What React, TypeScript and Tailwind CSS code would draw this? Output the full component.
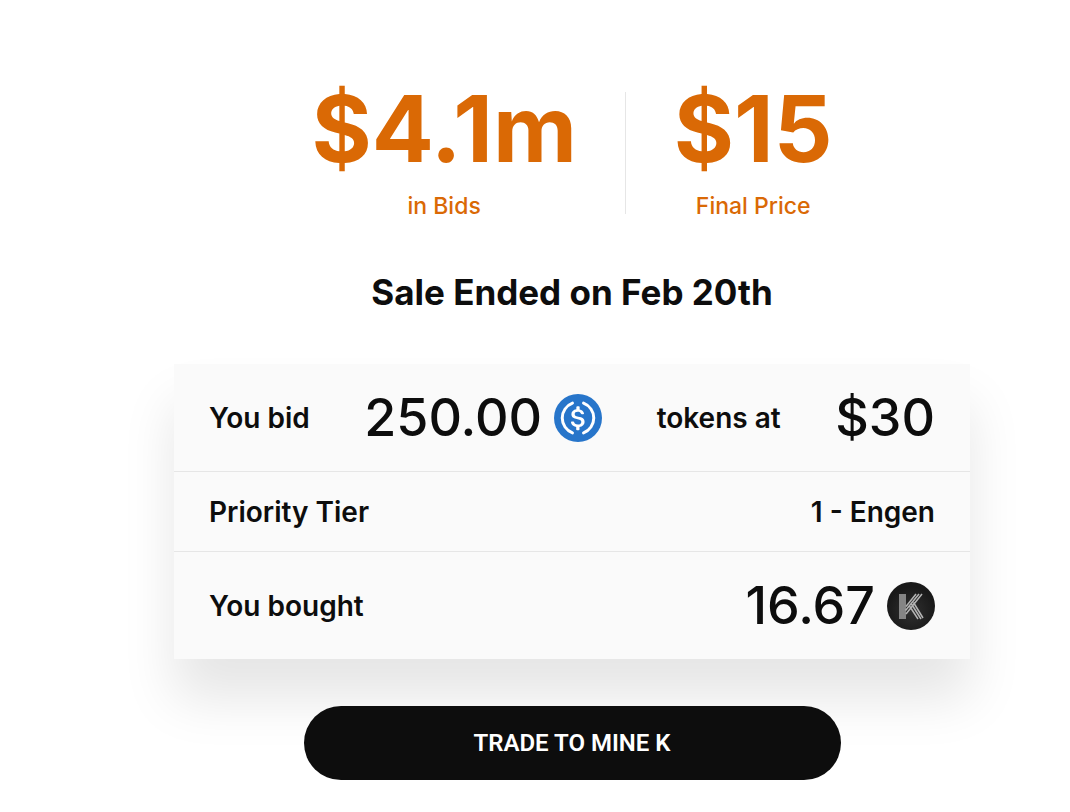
import React from "react";

const UsdcIcon: React.FC = () => (
  <svg className="size-12 shrink-0" viewBox="0 0 32 32" fill="none" aria-hidden="true">
    <circle cx="16" cy="16" r="16" fill="#2775ca" />
    <path
      fill="#fff"
      d="M20.4 18.6c0-2.3-1.4-3.1-4.2-3.5-2-.3-2.4-.8-2.4-1.8 0-.9.7-1.5 2-1.5 1.2 0 1.9.4 2.2 1.4.1.2.3.3.5.3h1c.3 0 .5-.2.5-.5v-.1c-.3-1.4-1.4-2.5-2.9-2.6V8.7c0-.3-.2-.5-.6-.5h-1c-.3 0-.5.2-.6.5v1.5c-2 .3-3.3 1.6-3.3 3.200 0 2.200 1.300 3 4.100 3.400 1.900.3 2.500.7 2.500 1.800s-1 1.800-2.200 1.800c-1.800 0-2.400-.7-2.600-1.700-.1-.3-.3-.4-.5-.4h-1.100c-.3 0-.5.2-.5.5v.1c.3 1.600 1.300 2.800 3.500 3.100v1.600c0 .3.200.5.600.5h1c.3 0 .5-.2.600-.5V22c2-.3 3.400-1.700 3.400-3.400z"
    />
    <path
      stroke="#fff"
      strokeWidth="2"
      strokeLinecap="round"
      d="M12.300 6.100a10.600 10.600 0 0 0 0 19.800M19.700 6.100a10.600 10.600 0 0 1 0 19.800"
    />
  </svg>
);

const KIcon: React.FC = () => (
  <svg className="size-12 shrink-0" viewBox="0 0 48 48" fill="none" aria-hidden="true">
    <defs>
      <radialGradient id="coin" cx="0.5" cy="0.6" r="0.5">
        <stop offset="0" stopColor="#303030" />
        <stop offset="1" stopColor="#191919" />
      </radialGradient>
    </defs>
    <circle cx="24" cy="24" r="24" fill="url(#coin)" />
    <path fill="#858585" d="M12 12h7v25h-7z" />
    <path
      stroke="#b4b4b4"
      strokeWidth="1.500"
      d="M19 24.500 29 12M18.500 28.500 32 12M19 32 35 12M22.500 24 31 37M24.500 22 34 37M26.500 20.500 36 36"
    />
  </svg>
);

interface StatProps {
  value: string;
  label: string;
}

const Stat: React.FC<StatProps> = ({ value, label }) => (
  <div className="flex flex-col items-center text-[#da6905]">
    <span className="text-[92px] leading-[90px] font-bold">{value}</span>
    <span className="mt-4 text-[23px] leading-8 font-medium">{label}</span>
  </div>
);

const App: React.FC = () => {
  return (
    <main className="bg-white pt-[84px] pr-6 pb-8 pl-[98px] font-['Inter',sans-serif] text-[#0d0d0d]">
      <div className="mx-auto flex max-w-[796px] flex-col items-center">
        {/* Sale totals */}
        <div className="flex justify-center gap-12">
          <Stat value="$4.1m" label="in Bids" />
          <div className="my-2 w-px bg-[#e6e6e6]" />
          <Stat value="$15" label="Final Price" />
        </div>

        <h2 className="mt-[50px] text-[35px] leading-10 font-bold">
          Sale Ended on Feb 20th
        </h2>

        {/* Bid summary */}
        <section className="mt-[52px] w-full divide-y divide-[#e6e6e6] bg-[#fafafa] text-[28px] font-semibold shadow-[0_40px_50px_rgba(0,0,0,0.1)]">
          <div className="flex h-[108px] items-center justify-between px-[35px]">
            <span>You bid</span>
            <span className="flex items-center gap-3 text-[52px] leading-none font-medium">
              250.00
              <UsdcIcon />
            </span>
            <span>tokens at</span>
            <span className="text-[52px] leading-none font-medium">$30</span>
          </div>
          <div className="flex h-20 items-center justify-between px-[35px]">
            <span>Priority Tier</span>
            <span>1 - Engen</span>
          </div>
          <div className="flex h-[107px] items-center justify-between px-[35px]">
            <span>You bought</span>
            <span className="flex items-center gap-3 text-[52px] leading-none font-medium">
              16.67
              <KIcon />
            </span>
          </div>
        </section>

        <button
          type="button"
          className="relative mt-[47px] h-[74px] w-full max-w-[537px] rounded-full bg-[#0d0d0d] font-['Roboto',sans-serif] text-[24px] font-semibold text-white"
        >
          TRADE TO MINE K
        </button>
      </div>
    </main>
  );
};

export default App;
